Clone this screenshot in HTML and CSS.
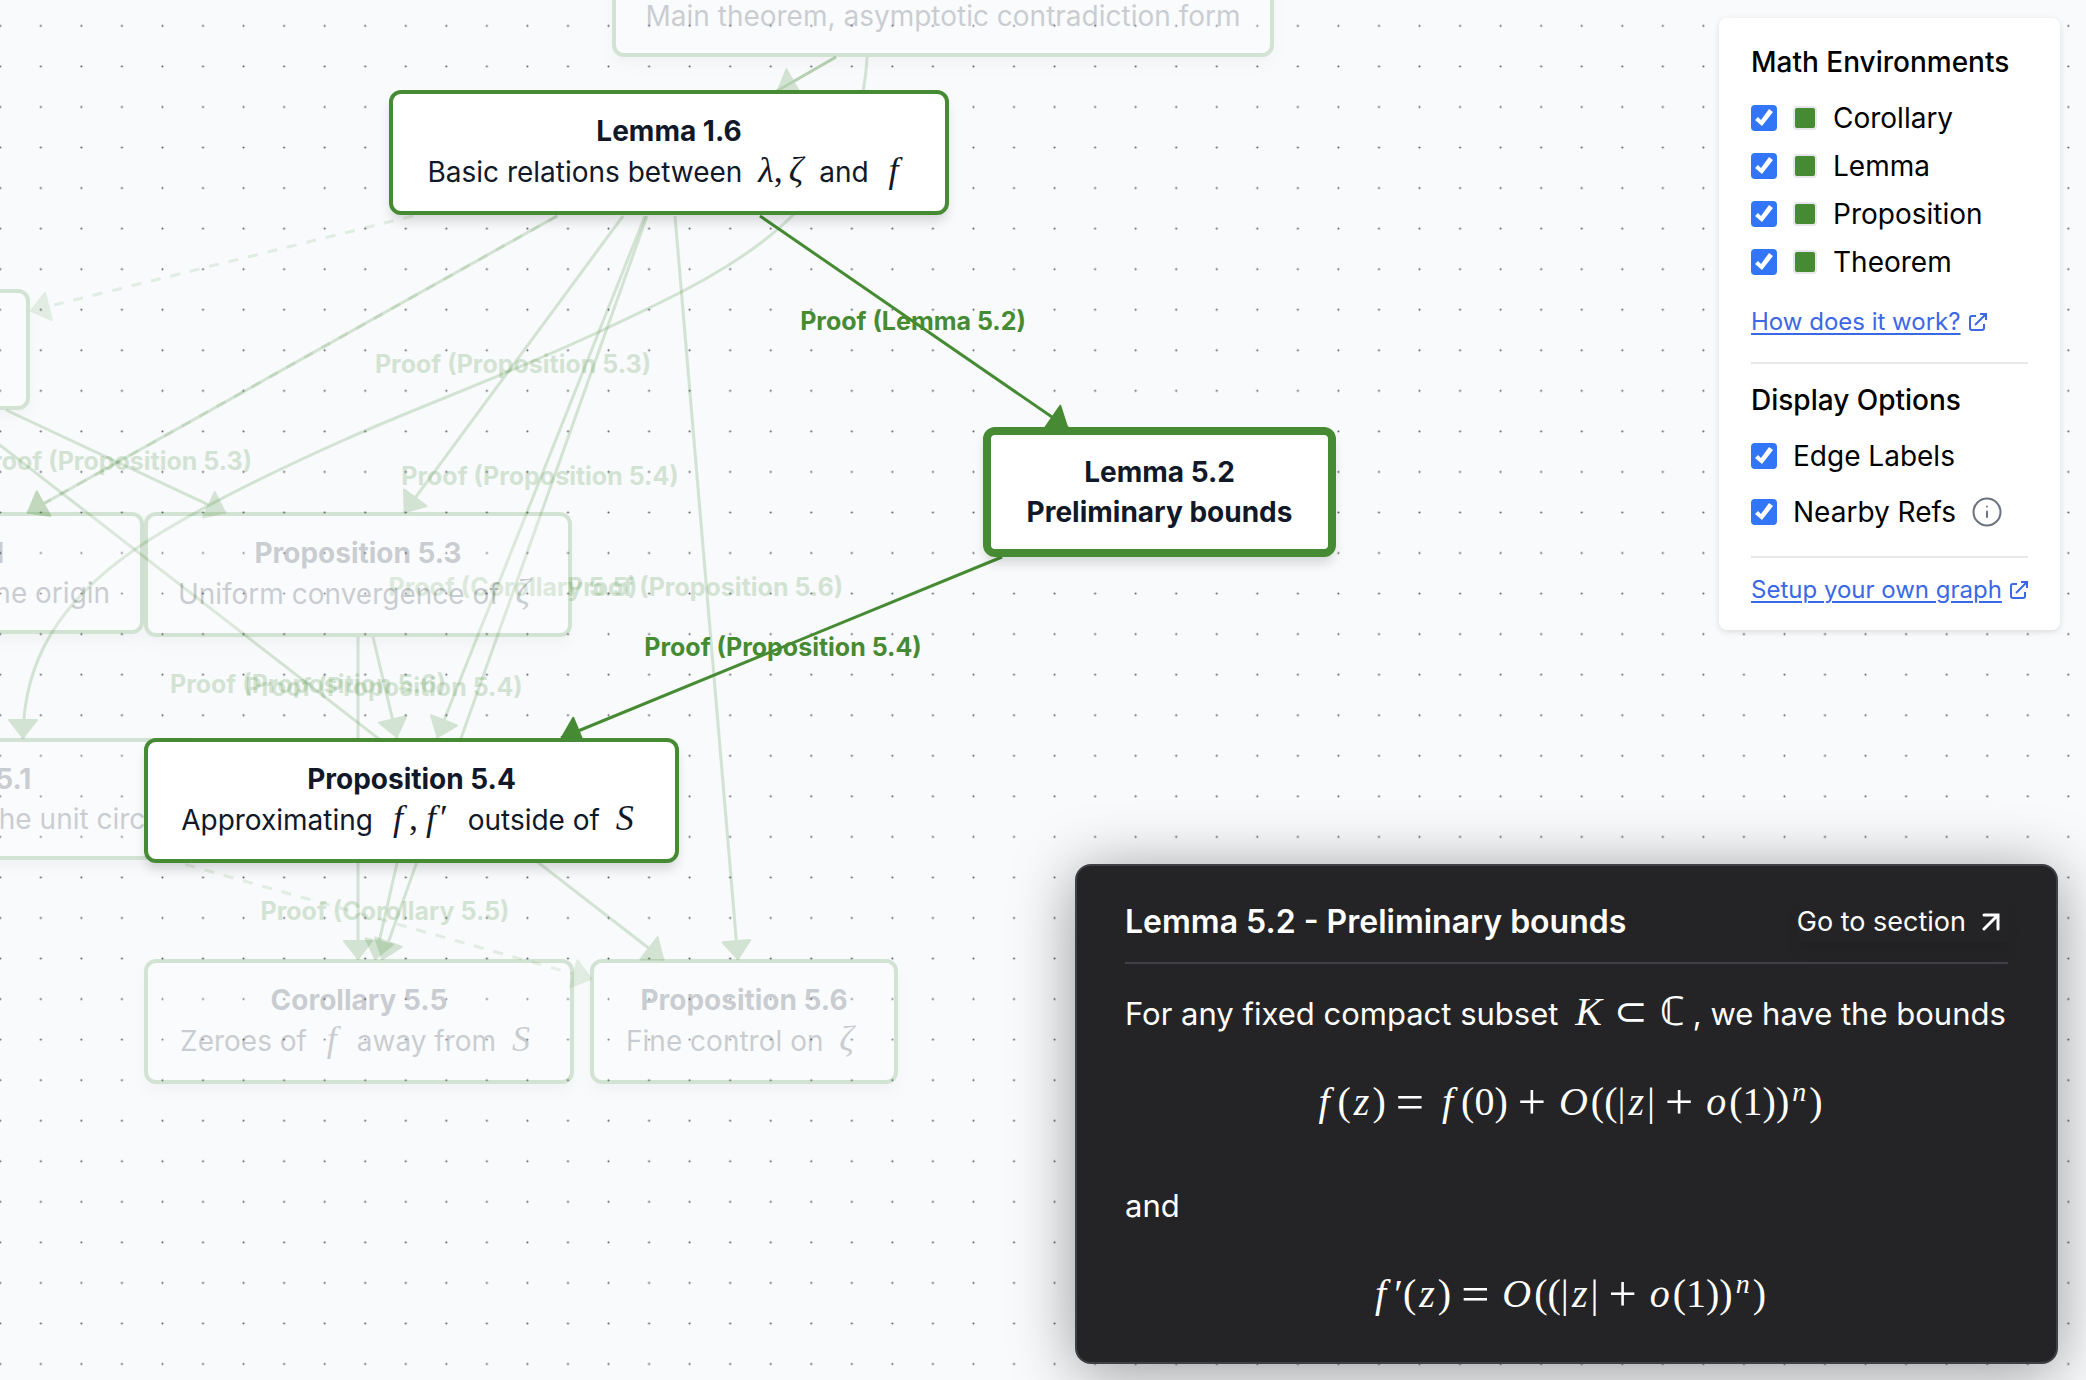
FILE: index.html
```html
<!DOCTYPE html>
<html lang="en">
<head>
    <meta charset="UTF-8">
    <meta name="viewport" content="width=device-width, initial-scale=1.0">
    <title>Dependency Graph</title>
    <link rel="stylesheet" href="styles.css">
</head>
<body>
    <main class="canvas">
        <svg class="edges" aria-hidden="true">
            <defs>
                <pattern id="dots" width="20" height="20" patternUnits="userSpaceOnUse" patternTransform="translate(-20 5.6) scale(2.0275)">
                    <circle cx="10" cy="10" r="0.5" class="dot" />
                </pattern>
                <marker id="arrow" viewBox="-22 -16 24 32" markerWidth="24" markerHeight="32" markerUnits="userSpaceOnUse" orient="auto">
                    <path class="arrow" d="M-19,-14 L-1,0 L-19,14 Z" />
                </marker>
            </defs>
            <rect width="100%" height="100%" fill="url(#dots)" />

            <!-- Dimmed edges -->
            <g class="edge-group dimmed">
                <path class="edge" d="M836,57 L777,91" />
                <path class="edge plain" d="M836,57 L777,91" />
                <path class="edge" d="M867,57 C864,130 830,180 792,216 C740,268 660,303 603,330 C500,378 420,406 344,440 C270,473 190,512 134,550 C60,602 23,660 23,739" />
                <path class="edge" d="M557,216 L27,513" />
                <path class="edge dashed" d="M557,216 L27,513" />
                <path class="edge" d="M6,410 L226,513" />
                <path class="edge" d="M-13,435 L664,960" />
                <path class="edge" d="M623,216 L404,513" />
                <path class="edge" d="M645,216 L437,738" />
                <path class="edge" d="M647,216 L382,960" />
                <path class="edge" d="M675,216 L738,960" />
                <path class="edge" d="M358,637 L358,960" />
                <path class="edge" d="M373,637 L397,738" />
                <path class="edge" d="M397,863 L375,960" />
                <path class="edge dashed" d="M413,216 L30,311" />
                <path class="edge dashed" d="M166,859 L592,979" />
                <text class="edge-label" x="513" y="373">Proof (Proposition 5.3)</text>
                <text class="edge-label" x="114" y="470">Proof (Proposition 5.3)</text>
                <text class="edge-label" x="540" y="485">Proof (Proposition 5.4)</text>
                <text class="edge-label" x="513" y="596">Proof (Corollary 5.5)</text>
                <text class="edge-label" x="705" y="596">Proof (Proposition 5.6)</text>
                <text class="edge-label" x="308" y="693">Proof (Proposition 5.6)</text>
                <text class="edge-label" x="384" y="696">Proof (Proposition 5.4)</text>
                <text class="edge-label" x="385" y="920">Proof (Corollary 5.5)</text>
            </g>

            <!-- Highlighted edges -->
            <g class="edge-group">
                <path class="edge" d="M760,216 L1068,428" />
                <path class="edge" d="M1002,557 L561,738" />
                <text class="edge-label" x="913" y="330">Proof (Lemma 5.2)</text>
                <text class="edge-label" x="783" y="656">Proof (Proposition 5.4)</text>
            </g>
        </svg>

        <div class="node dimmed main-theorem">
            <strong>Theorem 1.5</strong>
            <span>Main theorem, asymptotic contradiction form</span>
        </div>
        <div class="node dimmed left-top"></div>
        <div class="node dimmed left-origin">
            <strong>Bound</strong>
            <span>Bounds near the origin</span>
        </div>
        <div class="node dimmed prop-53">
            <strong>Proposition 5.3</strong>
            <span class="with-math">Uniform convergence of <i class="math">ζ</i></span>
        </div>
        <div class="node dimmed left-circle">
            <strong>Lemma 5.1</strong>
            <span>Size bounds near the unit circle</span>
        </div>
        <div class="node dimmed cor-55">
            <strong>Corollary 5.5</strong>
            <span class="with-math">Zeroes of <i class="math f">f</i> away from <i class="math">S</i></span>
        </div>
        <div class="node dimmed prop-56">
            <strong>Proposition 5.6</strong>
            <span class="with-math">Fine control on <i class="math">ζ</i></span>
        </div>
        <div class="node lemma-16">
            <strong>Lemma 1.6</strong>
            <span class="with-math">Basic relations between <i class="math">λ<b>,</b>ζ</i> and <i class="math f">f</i></span>
        </div>
        <div class="node prop-54">
            <strong>Proposition 5.4</strong>
            <span class="with-math">Approximating <i class="math f">f<b>,</b>f<b class="prime">′</b></i> outside of <i class="math">S</i></span>
        </div>
        <div class="node selected lemma-52">
            <strong>Lemma 5.2</strong>
            <span>Preliminary bounds</span>
        </div>
    </main>

    <aside class="panel">
        <h2>Math Environments</h2>
        <div class="env-list">
            <label><input type="checkbox" checked><span class="swatch"></span>Corollary</label>
            <label><input type="checkbox" checked><span class="swatch"></span>Lemma</label>
            <label><input type="checkbox" checked><span class="swatch"></span>Proposition</label>
            <label><input type="checkbox" checked><span class="swatch"></span>Theorem</label>
        </div>
        <div class="link-row">
            <a href="#how">How does it work?</a>
            <svg class="external" viewBox="0 0 18 18"><path d="M7,3 H3 Q1,3 1,5 V15 Q1,17 3,17 H13 Q15,17 15,15 V11 M11,1 H17 V7 M17,1 L6,12" /></svg>
        </div>
        <hr>
        <h2>Display Options</h2>
        <div class="option-list">
            <label><input type="checkbox" checked>Edge Labels</label>
            <div class="option">
                <label><input type="checkbox" checked>Nearby Refs</label>
                <svg class="info" viewBox="0 0 30 30"><circle cx="15" cy="15" r="13.5" /><path d="M15,14.5 V20" /><path d="M15,9.5 V9.6" /></svg>
            </div>
        </div>
        <hr>
        <div class="link-row">
            <a href="#setup">Setup your own graph</a>
            <svg class="external" viewBox="0 0 18 18"><path d="M7,3 H3 Q1,3 1,5 V15 Q1,17 3,17 H13 Q15,17 15,15 V11 M11,1 H17 V7 M17,1 L6,12" /></svg>
        </div>
    </aside>

    <section class="preview">
        <header>
            <h1>Lemma 5.2 - Preliminary bounds</h1>
            <a class="go" href="#lemma-5-2">Go to section
                <svg viewBox="0 0 18 18"><path d="M2,2 H16 V16 M16,2 L2,16" /></svg>
            </a>
        </header>
        <p>For any fixed compact subset <span class="math"><i>K</i><span class="rel">⊂</span><span class="set">ℂ</span></span>, we have the bounds</p>
        <div class="formula">
            <i class="f">f</i>(<i>z</i>)<span class="op">=</span><i class="f">f</i>(0)<span class="op">+</span><i>O</i>((|<i>z</i>|<span class="op">+</span><i>o</i>(1))<sup>n</sup>)
        </div>
        <p>and</p>
        <div class="formula">
            <i class="f">f</i><span class="prime">′</span>(<i>z</i>)<span class="op">=</span><i>O</i>((|<i>z</i>|<span class="op">+</span><i>o</i>(1))<sup>n</sup>)
        </div>
    </section>
</body>
</html>
```

FILE: styles.css
```css
* {
    box-sizing: border-box;
}
body {
    margin: 0;
    font-family: Inter, "Liberation Sans", sans-serif;
    font-size: 28px;
    line-height: 40px;
    color: #000;
    background-color: #f8fafc;
}
.canvas {
    position: relative;
    height: 100vh;
    overflow: hidden;
}

/* Edges */
.edges {
    position: absolute;
    inset: 0;
    width: 100%;
    height: 100%;
}
.dot {
    fill: #5c5c66;
}
.arrow {
    fill: #468b33;
    stroke: #468b33;
    stroke-width: 2;
    stroke-linejoin: round;
}
.edge {
    fill: none;
    stroke: #468b33;
    stroke-width: 3;
    marker-end: url(#arrow);
}
.edge.plain {
    marker-end: none;
}
.dimmed .edge,
.dimmed .edge-label {
    opacity: 0.2;
}
.dimmed .edge.dashed {
    opacity: 0.12;
    stroke-dasharray: 10 10;
}
.edge-label {
    fill: #468b33;
    font-size: 25px;
    font-weight: 700;
    text-anchor: middle;
}

/* Nodes */
.node {
    position: absolute;
    display: flex;
    flex-direction: column;
    align-items: center;
    padding: 17px 0;
    border: 4px solid #468b33;
    border-radius: 12px;
    background-color: #fff;
    color: #111827;
    white-space: nowrap;
    box-shadow: 0 8px 12px -2px rgba(0, 0, 0, 0.15);
}
.node.dimmed {
    opacity: 0.2;
}
.node.selected {
    border-width: 8px;
    font-weight: 700;
}
.node strong {
    font-weight: 700;
}
.with-math {
    line-height: 43px;
}
.node .math {
    margin: 0 8px;
    line-height: 0;
    font-size: 36px;
}
.node .math.f {
    margin: 0 12px;
}
.node .math b {
    margin-right: 6px;
    font-style: normal;
    font-weight: normal;
}
.node .math.f b {
    margin: 0 8px 0 6px;
}
.node .math.f .prime {
    margin: 0 0 0 4px;
}
.main-theorem {
    left: 612px;
    top: -65px;
    width: 662px;
}
.left-top {
    left: -300px;
    top: 289px;
    width: 330px;
    height: 121px;
}
.left-origin {
    left: -224px;
    top: 512px;
    width: 368px;
}
.prop-53 {
    left: 144px;
    top: 512px;
    width: 428px;
}
.left-circle {
    left: -287px;
    top: 738px;
    width: 494px;
}
.cor-55 {
    left: 144px;
    top: 959px;
    width: 430px;
}
.prop-56 {
    left: 590px;
    top: 959px;
    width: 308px;
}
.lemma-16 {
    left: 389px;
    top: 90px;
    width: 560px;
}
.prop-54 {
    left: 144px;
    top: 738px;
    width: 535px;
}
.lemma-52 {
    left: 983px;
    top: 427px;
    width: 353px;
}

/* Settings panel */
.panel {
    position: absolute;
    top: 18px;
    right: 26px;
    width: 341px;
    padding: 24px 32px;
    border-radius: 8px;
    background-color: #fff;
    box-shadow: 0 2px 6px rgba(0, 0, 0, 0.12);
}
.panel h2 {
    margin: 0 0 16px;
    font-size: 28px;
    font-weight: 500;
}
.panel hr {
    margin: 24px 0 16px;
    border: 0;
    border-top: 2px solid #e5e7eb;
}
.panel label,
.option,
.link-row {
    display: flex;
    align-items: center;
    gap: 16px;
}
.env-list {
    display: grid;
    gap: 8px;
    margin-bottom: 24px;
}
.option-list {
    display: grid;
    gap: 16px;
}
.panel input {
    appearance: none;
    width: 26px;
    height: 26px;
    margin: 0;
    border-radius: 4px;
    background-color: #3275f6;
}
.panel input:checked::before {
    content: "";
    display: block;
    width: 26px;
    height: 26px;
    background-color: #fff;
    clip-path: polygon(4px 15px, 7px 12px, 10px 15px, 18px 4px, 22px 7px, 11px 21px);
}
.swatch {
    width: 24px;
    height: 24px;
    border: 2px solid #e5e7eb;
    border-radius: 4px;
    background-color: #468b33;
}
.link-row {
    gap: 8px;
    font-size: 24px;
    line-height: 32px;
}
.link-row a {
    color: #3b68e4;
    text-decoration-thickness: 2px;
    text-underline-offset: 3px;
    white-space: nowrap;
}
.external {
    width: 18px;
    height: 18px;
    fill: none;
    stroke: #3b68e4;
    stroke-width: 2;
}
.info {
    width: 30px;
    height: 30px;
    fill: none;
    stroke: #6b7280;
    stroke-width: 2;
    stroke-linecap: round;
}

/* Statement preview */
.preview {
    position: absolute;
    right: 28px;
    bottom: 16px;
    width: 983px;
    padding: 32px 48px;
    border: 2px solid #3f3f46;
    border-radius: 16px;
    background-color: #242426;
    color: #fff;
    font-size: 31px;
    line-height: 48px;
    box-shadow: 0 8px 64px rgba(0, 0, 0, 0.4);
}
.preview header {
    display: flex;
    justify-content: space-between;
    align-items: center;
    padding-bottom: 16px;
    border-bottom: 2px solid #3f3f46;
    margin-bottom: 26px;
}
.preview h1 {
    margin: 0;
    font-size: 32px;
    font-weight: 600;
}
.go {
    display: flex;
    align-items: center;
    gap: 16px;
    padding-right: 8px;
    color: #fff;
    font-size: 27px;
    line-height: 40px;
    text-decoration: none;
    box-shadow: 0 10px 15px -3px rgba(0, 0, 0, 0.1);
}
.go svg {
    width: 18px;
    height: 18px;
    fill: none;
    stroke: #fff;
    stroke-width: 3;
    stroke-linecap: round;
}
.preview p {
    margin: 0;
    white-space: nowrap;
}
.math,
.formula {
    font-family: "Liberation Serif", serif;
    font-size: 40px;
}
.preview .math {
    margin: 0 8px;
    line-height: 0;
}
.formula {
    margin: 40px 0 56px;
    text-align: center;
}
.formula:last-child {
    margin-bottom: 12px;
}
.formula i {
    margin: 0 3px;
}
.formula .f {
    margin: 0 8px;
}
.formula sup {
    margin: 0 3px;
    font-size: 28px;
    font-style: italic;
    line-height: 0;
}
.rel {
    margin: 0 12px;
}
.op {
    margin: 0 10px;
    font-size: 50px;
    line-height: 0;
    vertical-align: -4px;
}
```
